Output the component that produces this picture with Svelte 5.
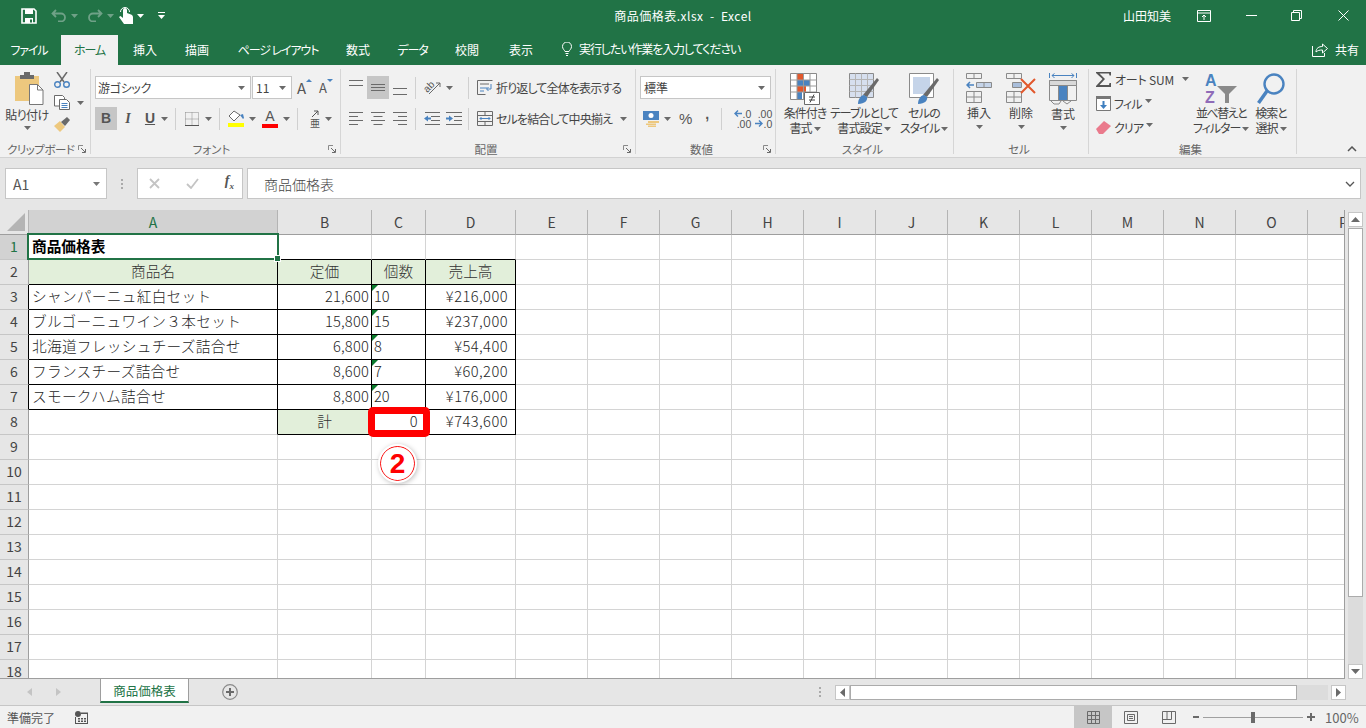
<script>
    const columns = "ABCDEFGHIJKLMNOP".split("");
    const colWidths = [249, 94, 54, 90, 72, 72, 72, 72, 72, 72, 72, 72, 72, 72, 72, 72];

    const data = {
        A1: { t: "商品価格表", c: "bold" },
        A2: { t: "商品名", c: "head box" },
        B2: { t: "定価", c: "head box" },
        C2: { t: "個数", c: "head box" },
        D2: { t: "売上高", c: "head box" },
        A3: { t: "シャンパーニュ紅白セット", c: "box name" },
        B3: { t: "21,600", c: "num box" },
        C3: { t: "10", c: "box warn" },
        D3: { t: "¥216,000", c: "yen box" },
        A4: { t: "ブルゴーニュワイン３本セット", c: "box name" },
        B4: { t: "15,800", c: "num box" },
        C4: { t: "15", c: "box warn" },
        D4: { t: "¥237,000", c: "yen box" },
        A5: { t: "北海道フレッシュチーズ詰合せ", c: "box name" },
        B5: { t: "6,800", c: "num box" },
        C5: { t: "8", c: "box warn" },
        D5: { t: "¥54,400", c: "yen box" },
        A6: { t: "フランスチーズ詰合せ", c: "box name" },
        B6: { t: "8,600", c: "num box" },
        C6: { t: "7", c: "box warn" },
        D6: { t: "¥60,200", c: "yen box" },
        A7: { t: "スモークハム詰合せ", c: "box name" },
        B7: { t: "8,800", c: "num box" },
        C7: { t: "20", c: "box warn" },
        D7: { t: "¥176,000", c: "yen box" },
        A8: { t: "", c: "rightline" },
        B8: { t: "計", c: "head box" },
        C8: { t: "0", c: "yen box" },
        D8: { t: "¥743,600", c: "yen box" },
        B1: { t: "", c: "underline" },
        C1: { t: "", c: "underline" },
        D1: { t: "", c: "underline" }
    };

    const rows = Array.from({ length: 18 }, (_, i) => i + 1);
    const gridTemplate = `29px ${colWidths.map((w) => w + "px").join(" ")}`;

    const tabs = [
        { name: "ファイル", w: 61, kana: true, file: true },
        { name: "ホーム", w: 57, active: true, kana: true },
        { name: "挿入", w: 54 },
        { name: "描画", w: 50 },
        { name: "ページ レイアウト", w: 112, kana: true },
        { name: "数式", w: 48 },
        { name: "データ", w: 61, kana: true },
        { name: "校閲", w: 48 },
        { name: "表示", w: 60 }
    ];
</script>

{#snippet caret(color = "#6a6a6a")}
    <svg class="caret" width="7" height="4" viewBox="0 0 7 4"><path d="M0 0h7L3.5 4z" fill={color} /></svg>
{/snippet}

{#snippet launcher()}
    <svg class="launcher" width="8" height="8" viewBox="0 0 8 8">
        <path d="M.5 5V.5H5" fill="none" stroke="#8a8a8a" />
        <path d="M3 3l4 4M7.5 4v3.5H4" fill="none" stroke="#6a6a6a" />
    </svg>
{/snippet}

<div class="excel">
    <header class="titlebar">
        <div class="qat">
            <svg width="16" height="16" viewBox="0 0 16 16"><path d="M1 1h12l2 2v12H1z" fill="none" stroke="#fff" stroke-width="1.6" /><path d="M4 1h8v5H4zM4 10h8v5H4z" fill="#fff" /><path d="M9 11.5h2v3H9z" fill="#217346" /></svg>
            <svg class="gap-undo" width="16" height="13" viewBox="0 0 16 13"><path d="M5 1L1.5 4.5 5 8M2 4.5h8a4 4 0 0 1 0 8H7" fill="none" stroke="#6fa187" stroke-width="1.8" /></svg>
            <span class="qcaret">{@render caret("#6fa187")}</span>
            <svg class="gap-redo" width="16" height="13" viewBox="0 0 16 13"><path d="M11 1l3.5 3.5L11 8M14 4.5H6a4 4 0 0 0 0 8h3" fill="none" stroke="#6fa187" stroke-width="1.8" /></svg>
            <span class="qcaret">{@render caret("#6fa187")}</span>
            <svg class="gap-touch" width="14" height="17" viewBox="0 0 14 17"><path d="M4 6V3a2 2 0 0 1 4 0v3l4 1.500c1.500.6 2 1.500 2 3V17H5L0 10l1.500-1L4 11z" fill="#fff" /><path d="M1.500 5A4 4 0 1 1 10.500 5" fill="none" stroke="#fff" /></svg>
            <span class="qcaret">{@render caret("#fff")}</span>
            <svg class="gap-custom" width="7" height="8" viewBox="0 0 7 8"><path d="M0 .5h7" stroke="#fff" /><path d="M0 3h7L3.500 7z" fill="#fff" /></svg>
        </div>
        <div class="doc-title">商品価格表.xlsx&nbsp;&nbsp;-&nbsp;&nbsp;Excel</div>
        <div class="winctl">
            <span class="user">山田知美</span>
            <svg class="w-display" width="14" height="12" viewBox="0 0 14 12" fill="none" stroke="#fff"><path d="M.5.500h13v11H.5zM.5 3h13" /><path d="M7 10V5M5 7l2-2 2 2" /></svg>
            <svg class="w-min" width="11" height="1" viewBox="0 0 11 1"><path d="M0 .5h11" stroke="#fff" /></svg>
            <svg class="w-max" width="11" height="11" viewBox="0 0 11 11" fill="none" stroke="#fff"><path d="M.5 2.500h8v8h-8zM2.500 2.500v-2h8v8h-2" /></svg>
            <svg class="w-close" width="11" height="11" viewBox="0 0 11 11" fill="none" stroke="#fff"><path d="M.5.500l10 10M10.500.500l-10 10" /></svg>
        </div>
    </header>

    <nav class="tabs">
        {#each tabs as tab}
            <div class="tab" class:active={tab.active} class:kana={tab.kana} class:file={tab.file} style="width:{tab.w}px">{tab.name}</div>
        {/each}
        <div class="tell">
            <svg width="10" height="14" viewBox="0 0 10 14" fill="none" stroke="#fff"><path d="M3 9.500C2.500 8 .5 7 .5 4.500a4.500 4.500 0 0 1 9 0C9.500 7 7.500 8 7 9.500zM3.500 11.500h3M4 13.500h2" /></svg>
            <span>実行したい作業を入力してください</span>
        </div>
        <div class="share">
            <svg width="16" height="15" viewBox="0 0 16 15" fill="none" stroke="#fff"><path d="M.5 4v10.500h12V11" /><path d="M4 10c0-4 3-5.500 6.500-5.500V2l5 4.500-5 4.500V8C7.500 8 5.500 8.500 4 10z" /></svg>
            <span>共有</span>
        </div>
    </nav>

    <section class="ribbon">
        <div class="group g-clip">
            <div class="body clip-body">
                <div class="big paste">
                    <svg width="29" height="33" viewBox="0 0 29 33">
                        <path d="M0 4h24v25H0z" fill="#edc87e" />
                        <path d="M5 3h4V0h6v3h4v4H5z" fill="#6a6a6a" />
                        <path d="M14.500 12.500h8l5.500 5.500v14.500H14.500z" fill="#fff" stroke="#777" />
                        <path d="M22.500 12.500v5.500H28" fill="none" stroke="#777" />
                    </svg>
                    <span class="lbl">貼り付け</span>
                    {@render caret()}
                </div>
                <div class="clip-tools">
                    <svg width="16" height="16" viewBox="0 0 16 16" fill="none"><path d="M3 0l7 10M13 0L6 10" stroke="#6a6a6a" stroke-width="1.500" /><circle cx="3.500" cy="12.500" r="2.800" stroke="#4a83c0" stroke-width="1.400" /><circle cx="12.500" cy="12.500" r="2.800" stroke="#4a83c0" stroke-width="1.400" /></svg>
                    <div class="copy">
                        <svg width="16" height="15" viewBox="0 0 16 15" fill="#fff" stroke="#6a6a6a"><path d="M.5.500h8l2 2V11H.5z" /><path d="M5.500 4.500h7l3 3v7h-10z" /><path d="M7.500 8.500h6M7.500 10.500h6M7.500 12.500h6" stroke="#4a83c0" /></svg>
                        {@render caret()}
                    </div>
                    <svg width="16" height="15" viewBox="0 0 16 15"><path d="M0 9l6-5 5 6-5 5z" fill="#edc87e" /><path d="M7 5l6-5 3 3-5 6z" fill="#6a6a6a" /></svg>
                </div>
            </div>
            <div class="foot"><span class="glabel">クリップボード</span>{@render launcher()}</div>
        </div>

        <div class="group g-font">
            <div class="body">
                <div class="row">
                    <div class="select fontname"><span>游ゴシック</span>{@render caret()}</div>
                    <div class="select fontsize"><span>11</span>{@render caret()}</div>
                    <div class="grow-a up">A<svg width="6" height="3" viewBox="0 0 6 3"><path d="M0 3h6L3 0z" fill="#4a83c0" /></svg></div>
                    <div class="grow-a down">A<svg width="6" height="3" viewBox="0 0 6 3"><path d="M0 0h6L3 3z" fill="#4a83c0" /></svg></div>
                </div>
                <div class="row">
                    <div class="btn on f-b">B</div>
                    <div class="btn f-i">I</div>
                    <div class="btn f-u">U</div>
                    <span class="c-u">{@render caret()}</span>
                    <i class="sep s-a"></i>
                    <svg class="border-ic" width="14" height="14" viewBox="0 0 14 14" fill="none" stroke="#8a8a8a" stroke-dasharray="1 1"><path d="M.5.500h13v13M7 .500v13M.5 7h13M.5.500v13" /><path d="M0 13.500h14" stroke="#555" stroke-dasharray="none" /></svg>
                    <span class="c-b">{@render caret()}</span>
                    <i class="sep s-b"></i>
                    <div class="fill">
                        <svg width="17" height="12" viewBox="0 0 17 12"><path d="M6 1L1 6l5 5 6-6z" fill="#fff" stroke="#6a6a6a" /><path d="M12 5l3-1 1 4-1 1z" fill="#4a83c0" /></svg>
                        <b class="bar yellow"></b>
                    </div>
                    <span class="c-f">{@render caret()}</span>
                    <div class="fcolor"><span>A</span><b class="bar red"></b></div>
                    <span class="c-fc">{@render caret()}</span>
                    <i class="sep s-c"></i>
                    <div class="phon">
                        <svg width="8" height="8" viewBox="0 0 8 8" fill="none" stroke="#555"><path d="M1 7l6-6M3 1h4v4" /></svg>
                        <span>亜</span>
                    </div>
                    <span class="c-ph">{@render caret()}</span>
                </div>
            </div>
            <div class="foot center"><span class="glabel">フォント</span>{@render launcher()}</div>
        </div>

        <div class="group g-align">
            <div class="body">
                <div class="row">
                    <div class="al top"><svg width="14" height="6" viewBox="0 0 14 6" stroke="#6a6a6a"><path d="M0 .5h14M0 5.500h14" /></svg></div>
                    <div class="al on"><svg width="14" height="7" viewBox="0 0 14 7" stroke="#6a6a6a"><path d="M0 .5h14M0 3.500h14M0 6.500h14" /></svg></div>
                    <div class="al low"><svg width="14" height="7" viewBox="0 0 14 7" stroke="#6a6a6a"><path d="M0 .5h14M0 6.500h14" /></svg></div>
                    <i class="sep s-d"></i>
                    <svg class="orient" width="17" height="15" viewBox="0 0 17 15" fill="none" stroke="#6a6a6a">
                        <text x="0" y="11" transform="rotate(-45 4 8)" class="ab">ab</text>
                        <path d="M5 14L16 3M16 3h-4M16 3v4" />
                    </svg>
                    <span class="c-or">{@render caret()}</span>
                    <i class="sep s-e"></i>
                    <div class="wrap-btn">
                        <svg width="16" height="15" viewBox="0 0 16 15" fill="none" stroke="#6a6a6a"><path d="M.5.500h15M.5.500v14h8M3 4h9" /><path d="M3 8h7M3 11h4" stroke="#4a83c0" /><path d="M14 4v5h-4M11.500 7L9.500 9l2 2" stroke="#4a83c0" /></svg>
                        <span class="lbl">折り返して全体を表示する</span>
                    </div>
                </div>
                <div class="row">
                    <div class="al top2"><svg width="14" height="13" viewBox="0 0 14 13" stroke="#6a6a6a"><path d="M0 .5h14M0 4.500h9M0 8.500h14M0 12.500h9" /></svg></div>
                    <div class="al"><svg width="14" height="13" viewBox="0 0 14 13" stroke="#6a6a6a"><path d="M0 .5h14M2.500 4.500h9M0 8.500h14M2.500 12.500h9" /></svg></div>
                    <div class="al"><svg width="14" height="13" viewBox="0 0 14 13" stroke="#6a6a6a"><path d="M0 .5h14M5 4.500h9M0 8.500h14M5 12.500h9" /></svg></div>
                    <i class="sep s-d"></i>
                    <svg class="ind1" width="16" height="13" viewBox="0 0 16 13"><path d="M1 .5h15M7 4.500h9M7 8.500h9M1 12.500h15" stroke="#6a6a6a" /><path d="M0 6.500l4-3v2h3v2H4v2z" fill="#4a83c0" /></svg>
                    <svg class="ind2" width="16" height="13" viewBox="0 0 16 13"><path d="M0 .5h16M8 4.500h8M8 8.500h8M0 12.500h16" stroke="#6a6a6a" /><path d="M7 6.500l-4-3v2H0v2h3v2z" fill="#4a83c0" /></svg>
                    <i class="sep s-f"></i>
                    <div class="wrap-btn">
                        <svg width="16" height="15" viewBox="0 0 16 15" fill="none" stroke="#6a6a6a"><path d="M.5.500h15v14H.5zM.5 4.500h15M.5 10.500h15M8 .5v4M8 10.500v4" /><path d="M3 7.500h10M4.500 6L3 7.500 4.500 9M11.500 6L13 7.500 11.500 9" stroke="#4a83c0" /></svg>
                        <span class="lbl">セルを結合して中央揃え</span>
                        <span class="c-merge">{@render caret()}</span>
                    </div>
                </div>
            </div>
            <div class="foot center"><span class="glabel">配置</span>{@render launcher()}</div>
        </div>

        <div class="group g-num">
            <div class="body">
                <div class="row">
                    <div class="select numfmt"><span>標準</span>{@render caret()}</div>
                </div>
                <div class="row">
                    <svg class="cur" width="16" height="16" viewBox="0 0 16 16"><path d="M0 0h16v9H0z" fill="#4a83c0" /><circle cx="8" cy="4.500" r="2.500" fill="#fff" /><path d="M5 10h11v2H5zM3 12.500h10v1.500H3zM5 14.500h8V16H5z" fill="#edc87e" /></svg>
                    <span class="c-cur">{@render caret()}</span>
                    <span class="pct">%</span>
                    <span class="comma">,</span>
                    <i class="sep s-g"></i>
                    <div class="dec">
                        <div class="drow"><svg width="8" height="7" viewBox="0 0 8 7"><path d="M4 .5L1 3.500l3 3M1 3.500h7" fill="none" stroke="#4a83c0" stroke-width="1.400" /></svg><span>.0</span></div>
                        <div class="drow"><span>.00</span></div>
                    </div>
                    <div class="dec">
                        <div class="drow"><span>.00</span></div>
                        <div class="drow"><svg width="8" height="7" viewBox="0 0 8 7"><path d="M4 .5l3 3-3 3M7 3.500H0" fill="none" stroke="#4a83c0" stroke-width="1.400" /></svg><span>.0</span></div>
                    </div>
                </div>
            </div>
            <div class="foot center"><span class="glabel">数値</span>{@render launcher()}</div>
        </div>

        <div class="group g-style">
            <div class="body bigs">
                <div class="big s1">
                    <svg width="30" height="32" viewBox="0 0 30 32">
                        <path d="M.5.500h26v26H.5z" fill="#fff" stroke="#8a8a8a" />
                        <path d="M7 1h6v6H7z" fill="#e2582c" /><path d="M7 7h13v6H7z" fill="#4a83c0" /><path d="M7 13h9v6H7z" fill="#e2582c" /><path d="M7 19h5v7H7z" fill="#4a83c0" />
                        <path d="M.5 7h26M.5 13h26M.5 19h26M7 .5v26M13.500.500v26M20 .500v26" fill="none" stroke="#9a9a9a" />
                        <path d="M14.500 19.500h15v12h-15z" fill="#fff" stroke="#6a6a6a" />
                        <path d="M19 24h6M19 27h6M20 29.500l4-8" fill="none" stroke="#444" />
                    </svg>
                    <span class="lbl xs">条件付き</span>
                    <span class="lbl">書式 {@render caret()}</span>
                </div>
                <div class="big s2">
                    <svg width="30" height="32" viewBox="0 0 30 32">
                        <path d="M.5.500h24v24H.5z" fill="#d6dfee" stroke="#8a8a8a" />
                        <path d="M.5 6.500h24M.5 12.500h24M.5 18.500h24M6.500.500v24M12.500.500v24M18.500.500v24" fill="none" stroke="#b4b4b4" />
                        <path d="M14 22l14-17 2 2-12 17z" fill="#6a6a6a" />
                        <path d="M9 31c0-5 3-9 6-9l3 2c1 3-2 7-9 7z" fill="#4a83c0" />
                    </svg>
                    <span class="lbl xs">テーブルとして</span>
                    <span class="lbl">書式設定 {@render caret()}</span>
                </div>
                <div class="big s3">
                    <svg width="30" height="32" viewBox="0 0 30 32">
                        <path d="M.5.500h24v24H.5z" fill="#fff" stroke="#8a8a8a" />
                        <path d="M4 4h17v17H4z" fill="#c5d4e9" />
                        <path d="M14 22l14-17 2 2-12 17z" fill="#6a6a6a" />
                        <path d="M9 31c0-5 3-9 6-9l3 2c1 3-2 7-9 7z" fill="#4a83c0" />
                    </svg>
                    <span class="lbl">セルの</span>
                    <span class="lbl">スタイル {@render caret()}</span>
                </div>
            </div>
            <div class="foot plain"><span class="glabel">スタイル</span></div>
        </div>

        <div class="group g-cell">
            <div class="body bigs">
                <div class="big c1">
                    <svg width="26" height="32" viewBox="0 0 26 32" fill="none" stroke="#8a8a8a">
                        <path d="M.5.500h15v5H.5zM8 .5v5M.5 18.500h15v11H.5zM.5 24h15M8 18.500v11" />
                        <path d="M10.500 9.500h15v5h-15zM18 9.500v5" fill="#c5d4e9" />
                        <path d="M8 12H1M4 9l-3 3 3 3" stroke="#4a83c0" stroke-width="1.500" />
                    </svg>
                    <span class="lbl">挿入</span>
                    {@render caret()}
                </div>
                <div class="big c2">
                    <svg width="30" height="32" viewBox="0 0 30 32" fill="none" stroke="#8a8a8a">
                        <path d="M.5.500h15v5H.5zM8 .5v5M.5 18.500h15v11H.5zM.5 24h15M8 18.500v11M6.500 9.500h9v5h-9z" />
                        <path d="M7 10h8v4H7z" fill="#a9bedb" stroke="none" />
                        <path d="M15 6l14 14M29 6L15 20" stroke="#e2582c" stroke-width="2" />
                    </svg>
                    <span class="lbl">削除</span>
                    {@render caret()}
                </div>
                <div class="big c3">
                    <svg width="28" height="33" viewBox="0 0 28 33" fill="none" stroke="#8a8a8a">
                        <path d="M.5 0v5M27.500 0v5M3 2.500h22M3 2.500l2.500-2M3 2.500L5.500 5M25 2.500l-2.500-2M25 2.500L22.500 5" stroke="#4a83c0" />
                        <path d="M.5 7.500h27v20H.5zM.5 12.500h27M9.500 7.500v20M18.500 7.500v20" />
                        <path d="M10 8h8v19h-8z" fill="#4a83c0" stroke="none" />
                        <path d="M.5 7.500h27v5H.5z" fill="#d9d9d9" />
                        <path d="M2 28l3 3h5l2-3M14 28l4 3 4-3" />
                    </svg>
                    <span class="lbl">書式</span>
                    {@render caret()}
                </div>
            </div>
            <div class="foot plain"><span class="glabel">セル</span></div>
        </div>

        <div class="group g-edit">
            <div class="body edit-body">
                <div class="edit-list">
                    <div class="eitem">
                        <svg width="16" height="15" viewBox="0 0 16 15"><path d="M0 0h15v3.500h-1.500L13 1.500H3.500L9 7l-5.500 6H13l.5-2H15v4H0v-1l6.500-7L0 1z" fill="#555" /></svg>
                        <span class="lbl sum">オート SUM</span>
                        <span class="c-sum">{@render caret()}</span>
                    </div>
                    <div class="eitem">
                        <svg width="15" height="15" viewBox="0 0 15 15"><path d="M.5.500h14v14H.5z" fill="#fff" stroke="#777" /><path d="M0 0h15v3H0z" fill="#777" /><path d="M6.500 5h2v4H11l-3.500 4L4 9h2.500z" fill="#3f7fbf" /></svg>
                        <span class="lbl">フィル</span>
                        <span class="c-e">{@render caret()}</span>
                    </div>
                    <div class="eitem">
                        <svg width="15" height="13" viewBox="0 0 15 13"><path d="M0 8l8-8 7 5-8 8H3z" fill="#ea7a8c" /></svg>
                        <span class="lbl">クリア</span>
                        <span class="c-e">{@render caret()}</span>
                    </div>
                </div>
                <div class="big e1">
                    <svg width="32" height="32" viewBox="0 0 32 32">
                        <text x="0" y="13" class="az blue">A</text>
                        <text x="0" y="30" class="az purple">Z</text>
                        <path d="M12 13h20l-8 8v9h-4v-9z" fill="#8a8a8a" />
                    </svg>
                    <span class="lbl xt">並べ替えと</span>
                    <span class="lbl xs">フィルター {@render caret()}</span>
                </div>
                <div class="big e2">
                    <svg width="28" height="32" viewBox="0 0 28 32" fill="none"><circle cx="17" cy="11" r="9.500" stroke="#4a83c0" stroke-width="2.400" /><path d="M10 18L1.500 30" stroke="#4a83c0" stroke-width="3.500" /></svg>
                    <span class="lbl xs">検索と</span>
                    <span class="lbl">選択 {@render caret()}</span>
                </div>
            </div>
            <div class="foot plain"><span class="glabel">編集</span></div>
        </div>

        <svg class="collapse" width="10" height="6" viewBox="0 0 10 6"><path d="M1 5l4-4 4 4" fill="none" stroke="#555" stroke-width="1.500" /></svg>
    </section>

    <section class="formula">
        <div class="namebox"><span>A1</span>{@render caret("#777")}</div>
        <div class="dots"><i></i><i></i><i></i></div>
        <div class="fbtns">
            <svg width="11" height="11" viewBox="0 0 11 11"><path d="M1 1l9 9M10 1l-9 9" stroke="#c4c4c4" stroke-width="1.800" /></svg>
            <svg width="13" height="11" viewBox="0 0 13 11"><path d="M1 6l4 4 7-9" fill="none" stroke="#c4c4c4" stroke-width="1.800" /></svg>
            <span class="fx">f<sub>x</sub></span>
        </div>
        <div class="finput">
            <span>商品価格表</span>
            <svg width="10" height="6" viewBox="0 0 10 6"><path d="M1 1l4 4 4-4" fill="none" stroke="#555" stroke-width="1.300" /></svg>
        </div>
    </section>

    <section class="sheet">
        <div class="gridwrap">
            <div class="grid" style="grid-template-columns:{gridTemplate}">
                <div class="corner"><svg width="18" height="18" viewBox="0 0 18 18"><path d="M18 0v18H0z" fill="#b4b4b4" /></svg></div>
                {#each columns as col}
                    <div class="colhead" class:sel={col == "A"}>{col}</div>
                {/each}
                {#each rows as row}
                    <div class="rowhead" class:sel={row == 1} class:dark={row >= 3 && row <= 7}>{row}</div>
                    {#each columns as col}
                        {@const cell = data[col + row]}
                        <div class="cell {cell ? cell.c : ''}">{cell ? cell.t : ""}</div>
                    {/each}
                {/each}
            </div>
            <div class="selection"><i></i></div>
            <div class="redbox"></div>
            <div class="circled">2</div>
        </div>
        <div class="vscroll">
            <div class="sbtn"><svg width="9" height="5" viewBox="0 0 9 5"><path d="M0 5h9L4.500 0z" fill="#6a6a6a" /></svg></div>
            <div class="vthumb"></div>
            <div class="vtrack"></div>
            <div class="sbtn"><svg width="9" height="5" viewBox="0 0 9 5"><path d="M0 0h9L4.500 5z" fill="#6a6a6a" /></svg></div>
        </div>
    </section>

    <section class="sheetbar">
        <div class="navs">
            <svg width="5" height="8" viewBox="0 0 5 8"><path d="M5 0v8L0 4z" fill="#c4c4c4" /></svg>
            <svg width="5" height="8" viewBox="0 0 5 8"><path d="M0 0v8l5-4z" fill="#c4c4c4" /></svg>
        </div>
        <div class="sheettab">商品価格表</div>
        <svg class="addsheet" width="16" height="16" viewBox="0 0 16 16" fill="none"><circle cx="8" cy="8" r="7.300" stroke="#8a8a8a" stroke-width="1.200" /><path d="M8 4v8M4 8h8" stroke="#6a6a6a" stroke-width="2" /></svg>
        <div class="hdots"><i></i><i></i><i></i></div>
        <div class="hscroll">
            <div class="sbtn h"><svg width="5" height="9" viewBox="0 0 5 9"><path d="M5 0v9L0 4.500z" fill="#6a6a6a" /></svg></div>
            <div class="hthumb"></div>
            <div class="htrack"></div>
            <div class="sbtn h right"><svg width="5" height="9" viewBox="0 0 5 9"><path d="M0 0v9l5-4.500z" fill="#6a6a6a" /></svg></div>
        </div>
    </section>

    <footer class="status">
        <span class="ready">準備完了</span>
        <svg class="macro" width="13" height="13" viewBox="0 0 13 13"><circle cx="3" cy="3" r="3" fill="#555" /><path d="M6 1.500h7V13H0V6h1v6h11V3H6z" fill="#555" /><path d="M3 7h2v1.500H3zM6 7h2v1.500H6zM9 7h2v1.500H9zM3 9.500h2V11H3zM6 9.500h2V11H6zM9 9.500h2V11H9z" fill="#555" /></svg>
        <div class="views">
            <div class="view on"><svg width="13" height="13" viewBox="0 0 13 13" fill="none" stroke="#6a6a6a"><path d="M.5.500h12v12H.5zM4.500.500v12M8.500.500v12M.5 4.500h12M.5 8.500h12" /></svg></div>
            <div class="view"><svg width="14" height="13" viewBox="0 0 14 13" fill="none" stroke="#6a6a6a"><path d="M.5.500h13v12H.5zM3.500 3.500h7v6h-7zM5 5.500h4M5 7.500h4" /></svg></div>
            <div class="view"><svg width="14" height="13" viewBox="0 0 14 13" fill="none" stroke="#6a6a6a"><path d="M.5.500h13v12H.5zM.5 8.500h9v-8" /><path d="M5 .5v8" /></svg></div>
        </div>
        <div class="zoom">
            <b class="zminus"></b>
            <div class="slider"><i></i></div>
            <b class="zplus"></b>
            <span>100%</span>
        </div>
    </footer>
</div>

<style>
    :global(body) {
        margin: 0;
        overflow: hidden;
    }

    .excel {
        width: 1366px;
        height: 728px;
        display: flex;
        flex-direction: column;
        overflow: hidden;
        font-family: "Noto Sans CJK JP", "Noto Sans", sans-serif;
        font-feature-settings: "palt";
        font-size: 12px;
        color: #444;
        background: #e6e6e6;
    }

    svg {
        display: block;
        flex: none;
    }

    .titlebar {
        height: 35px;
        flex: none;
        box-sizing: border-box;
        padding-bottom: 4px;
        display: grid;
        grid-template-columns: 1fr auto 1fr;
        align-items: center;
        background: #217346;
        color: #fff;
    }

    .qat,
    .winctl {
        display: flex;
        align-items: center;
    }

    .qat {
        padding-left: 21px;
    }

    .gap-undo { margin-left: 14px; }
    .qcaret { margin-left: 4px; }
    .gap-redo { margin-left: 9px; }
    .gap-touch { margin-left: 5px; }
    .gap-custom { margin-left: 14px; }

    .doc-title {
        font-size: 12px;
        line-height: 20px;
        letter-spacing: 0.500px;
    }

    .winctl {
        justify-content: flex-end;
    }

    .user {
        margin-right: 26px;
    }

    .w-min { margin-left: 35px; }
    .w-max { margin-left: 34px; }
    .w-close { margin-left: 36px; margin-right: 17px; }

    .tabs {
        height: 30px;
        flex: none;
        display: flex;
        align-items: stretch;
        background: #217346;
        color: #fff;
        line-height: 29px;
    }

    .tab {
        text-align: center;
        white-space: nowrap;
    }

    .tab.file {
        padding-right: 3px;
        box-sizing: border-box;
    }

    .tab.kana {
        letter-spacing: -1.100px;
    }

    .tab.active {
        background: #f1f1f1;
        color: #217346;
    }

    .tell {
        display: flex;
        align-items: center;
        gap: 7px;
        margin-left: 11px;
        padding-bottom: 3px;
        letter-spacing: -1.100px;
    }

    .share {
        display: flex;
        align-items: center;
        gap: 7px;
        margin-left: auto;
        padding-right: 7px;
        padding-bottom: 1px;
    }

    .ribbon {
        position: relative;
        height: 93px;
        flex: none;
        display: flex;
        box-sizing: border-box;
        background: #f1f1f1;
        border-bottom: 1px solid #d2d2d2;
        padding-top: 4px;
    }

    .group {
        height: 85px;
        box-sizing: border-box;
        border-right: 1px solid #d6d6d6;
        display: flex;
        flex-direction: column;
        flex: none;
    }

    .g-clip { width: 91px; }
    .g-font { width: 250px; padding-left: 4px; }
    .g-align { width: 295px; padding-left: 8px; }
    .g-num { width: 140px; padding-left: 4px; }
    .g-style { width: 178px; }
    .g-cell { width: 135px; }
    .g-edit { width: 208px; }

    .body {
        height: 68px;
        padding-top: 7px;
        flex: none;
    }

    .row {
        height: 23px;
        display: flex;
        align-items: center;
        margin-bottom: 8px;
    }

    .row:last-child {
        margin-bottom: 0;
    }

    .foot {
        height: 16px;
        margin-top: -3px;
        display: flex;
        align-items: center;
        padding-right: 4px;
        flex: none;
    }

    .foot.center .glabel,
    .foot.plain .glabel {
        flex: 1;
        text-align: center;
    }

    .glabel {
        font-size: 11.500px;
        color: #666;
        white-space: nowrap;
    }

    .g-clip .glabel {
        margin-left: 7px;
        flex: 1;
        letter-spacing: -0.500px;
    }

    .lbl {
        display: block;
        white-space: nowrap;
        line-height: 15px;
        color: #444;
        letter-spacing: -0.850px;
    }

    .lbl.xs { letter-spacing: -1px; }
    .lbl.xt { letter-spacing: -1.500px; }
    .lbl.sum { letter-spacing: -0.200px; }
    .g-cell .lbl { letter-spacing: 0; }

    .lbl :global(.caret) {
        display: inline-block;
        vertical-align: 2px;
    }

    .big {
        display: flex;
        flex-direction: column;
        align-items: center;
        flex: none;
    }

    .clip-body {
        display: flex;
        padding-top: 3px;
        height: 72px;
    }

    .paste {
        width: 54px;
    }

    .paste > svg:first-child {
        margin: 0 0 0 5px;
    }

    .paste .lbl {
        margin-top: 2px;
        letter-spacing: -0.500px;
    }

    .paste :global(.caret) {
        margin-top: 4px;
    }

    .clip-tools {
        display: flex;
        flex-direction: column;
        gap: 7px;
    }

    .copy {
        display: flex;
        align-items: center;
        gap: 7px;
    }

    .select {
        height: 23px;
        box-sizing: border-box;
        background: #fff;
        border: 1px solid #c6c6c6;
        display: flex;
        align-items: center;
        justify-content: space-between;
        padding: 0 5px 0 2px;
        flex: none;
    }

    .fontname { width: 156px; letter-spacing: -0.300px; }
    .fontsize { width: 40px; margin-left: 1px; padding-left: 3px; }
    .numfmt { width: 131px; padding-left: 3px; }

    .grow-a {
        font-size: 15px;
        line-height: 18px;
        color: #555;
        display: flex;
        align-items: flex-start;
        flex: none;
    }

    .grow-a.up { margin-left: 5px; width: 22px; }
    .grow-a.down { font-size: 13px; width: 16px; }

    .btn {
        width: 22px;
        height: 23px;
        line-height: 23px;
        text-align: center;
        flex: none;
        font-family: "Liberation Sans", sans-serif;
        font-size: 14px;
        font-weight: bold;
        color: #555;
    }

    .on {
        background: #c6c6c6;
    }

    .f-i { font-style: italic; font-family: "Liberation Serif", serif; }
    .f-u { text-decoration: underline; }

    .sep {
        display: block;
        width: 1px;
        height: 22px;
        background: #d0d0d0;
        flex: none;
    }

    .s-a { margin: 0 9px 0 7px; }
    .s-b { margin: 0 8px 0 7px; }
    .c-b { margin-left: 6px; }
    .s-c { margin: 0 10px 0 7px; }
    .s-d { margin: 0 8px 0 4px; }
    .s-e { margin: 0 8px 0 15px; }
    .s-f { margin: 0 8px 0 6px; }
    .s-g { margin: 0 8px 0 12px; }

    .fill,
    .fcolor {
        width: 16px;
        flex: none;
        display: flex;
        flex-direction: column;
        align-items: center;
    }

    .fcolor span {
        font-family: "Liberation Sans", sans-serif;
        font-size: 14px;
        line-height: 13px;
        color: #555;
    }

    .bar {
        display: block;
        width: 16px;
        height: 4px;
        margin-top: 1px;
    }

    .yellow { background: #ffff00; }
    .red { background: #ff0000; }
    .c-f { margin: 0 6px 0 5px; }
    .c-fc { margin-left: 5px; }

    .phon {
        width: 14px;
        flex: none;
        font-size: 10px;
        line-height: 10px;
        color: #555;
        display: flex;
        flex-direction: column;
        align-items: center;
    }

    .c-ph { margin-left: 3px; }

    .al {
        width: 22px;
        height: 23px;
        box-sizing: border-box;
        display: flex;
        align-items: center;
        justify-content: center;
        flex: none;
    }

    .al.top {
        width: 18px;
        justify-content: flex-start;
        align-items: flex-start;
        padding-top: 4px;
    }

    .al.top2 {
        width: 18px;
        justify-content: flex-start;
    }

    .al.low {
        align-items: flex-end;
        padding-bottom: 4px;
    }

    .orient {
        overflow: visible;
    }

    .ab {
        font-family: "Liberation Sans", sans-serif;
        font-size: 10px;
        fill: #555;
        stroke: none;
    }

    .c-or { margin-left: 5px; }

    .wrap-btn {
        display: flex;
        align-items: center;
        gap: 3px;
        flex: none;
    }

    .c-merge { margin-left: 5px; }

    .ind2 { margin-left: 6px; }

    .cur { margin-left: 3px; }
    .c-cur { margin-left: 5px; }

    .pct {
        margin-left: 8px;
        font-family: "Liberation Sans", sans-serif;
        font-size: 15px;
        color: #555;
    }

    .comma {
        margin-left: 13px;
        margin-bottom: 9px;
        font-family: "Liberation Sans", sans-serif;
        font-weight: bold;
        font-size: 14px;
        line-height: 14px;
        color: #555;
    }

    .dec {
        width: 21px;
        flex: none;
        font-family: "Liberation Sans", sans-serif;
        font-size: 10.500px;
        line-height: 10px;
        color: #555;
    }

    .drow {
        display: flex;
        justify-content: flex-end;
        align-items: center;
        height: 10px;
    }

    .bigs {
        display: flex;
        padding-top: 4px;
        height: 71px;
    }

    .s1 { width: 58px; }
    .s2 { width: 60px; }
    .s3 { width: 60px; }
    .g-cell .big { width: 42px; }
    .g-cell .bigs { padding-left: 4px; }
    .g-cell :global(.caret) { margin-top: 5px; }

    .edit-body {
        display: flex;
        padding-top: 0;
        height: 75px;
    }

    .edit-list {
        display: flex;
        flex-direction: column;
        gap: 6px;
        padding: 1px 0 0 7px;
        width: 93px;
        flex: none;
    }

    .eitem {
        display: flex;
        align-items: center;
        gap: 3px;
        height: 18px;
    }

    .c-sum { margin-left: 5px; }
    .c-e { margin-left: 0; margin-top: -4px; }

    .e1, .e2 { padding-top: 4px; }
    .e1 { width: 64px; }
    .e2 { width: 36px; }

    .az {
        font-family: "Liberation Sans", sans-serif;
        font-weight: bold;
        font-size: 16px;
    }

    .blue { fill: #4a83c0; }
    .purple { fill: #8f6bb8; }

    .collapse {
        position: absolute;
        right: 9px;
        bottom: 5px;
    }

    .formula {
        height: 52px;
        flex: none;
        box-sizing: border-box;
        display: flex;
        align-items: center;
        padding: 0 5px 1px;
        background: #e6e6e6;
    }

    .namebox,
    .fbtns,
    .finput {
        height: 31px;
        box-sizing: border-box;
        background: #fff;
        border: 1px solid #c6c6c6;
        display: flex;
        align-items: center;
        flex: none;
    }

    .namebox {
        width: 102px;
        justify-content: space-between;
        padding: 0 6px 0 7px;
        font-size: 14px;
        color: #555;
    }

    .dots {
        width: 30px;
        display: flex;
        flex-direction: column;
        align-items: center;
        gap: 2px;
        flex: none;
    }

    .dots i,
    .hdots i {
        display: block;
        width: 2px;
        height: 2px;
        background: #aaa;
    }

    .fbtns {
        width: 106px;
        justify-content: space-between;
        padding: 0 8px 0 11px;
    }

    .fx {
        font-family: "Liberation Serif", serif;
        font-style: italic;
        font-weight: bold;
        font-size: 14px;
        line-height: 14px;
        color: #555;
    }

    .fx sub {
        font-size: 9px;
    }

    .finput {
        width: 1114px;
        margin-left: 4px;
        padding: 0 5px 0 16px;
        justify-content: space-between;
        font-size: 14px;
        font-weight: 300;
        color: #444;
        font-feature-settings: normal;
    }

    .sheet {
        height: 469px;
        flex: none;
        display: flex;
        box-sizing: border-box;
    }

    .gridwrap {
        position: relative;
        width: 1345px;
        height: 469px;
        overflow: hidden;
        background: #fff;
        flex: none;
        border-bottom: 1px solid #9e9e9e;
        border-right: 1px solid #9e9e9e;
        box-sizing: border-box;
    }

    .grid {
        display: grid;
        grid-auto-rows: 25px;
        font-size: 14.670px;
        font-weight: 300;
        font-feature-settings: normal;
        color: #262626;
    }

    .corner {
        background: #e6e6e6;
        border-right: 1px solid #b4b4b4;
        border-bottom: 1px solid #9e9e9e;
        box-sizing: border-box;
        padding: 3px 0 0 7px;
    }

    .colhead,
    .rowhead {
        background: #e6e6e6;
        box-sizing: border-box;
        text-align: center;
        font-size: 14px;
        font-weight: 400;
        color: #444;
    }

    .colhead {
        line-height: 25px;
        border-right: 1px solid #b4b4b4;
        border-bottom: 1px solid #9e9e9e;
    }

    .rowhead {
        line-height: 23px;
        border-right: 1px solid #9e9e9e;
        border-bottom: 1px solid #c6c6c6;
    }

    .rowhead.dark {
        border-right-color: #000;
    }

    .colhead.sel,
    .rowhead.sel {
        background: #d2d2d2;
        color: #217346;
    }

    .cell {
        box-sizing: border-box;
        border-right: 1px solid #d4d4d4;
        border-bottom: 1px solid #d4d4d4;
        padding: 0 3px;
        line-height: 21px;
        white-space: nowrap;
        position: relative;
    }

    .name {
        letter-spacing: 0.300px;
    }

    .box {
        border-right-color: #000;
        border-bottom-color: #000;
    }

    .underline {
        border-bottom-color: #000;
    }

    .rightline {
        border-right-color: #000;
    }

    .bold {
        font-weight: bold;
        color: #000;
    }

    .head {
        background: #e2efda;
        text-align: center;
        color: #333;
    }

    .num {
        text-align: right;
        padding-right: 2px;
        letter-spacing: 0.200px;
    }

    .yen {
        text-align: right;
        padding-right: 7px;
        letter-spacing: 0.450px;
    }

    .warn {
        padding-left: 2px;
    }

    .warn::before {
        content: "";
        position: absolute;
        left: 0;
        top: 0;
        border-top: 6px solid #0b7a2c;
        border-right: 6px solid transparent;
    }

    .selection {
        position: absolute;
        left: 27px;
        top: 23px;
        width: 252px;
        height: 27px;
        box-sizing: border-box;
        border: 2px solid #217346;
    }

    .selection i {
        position: absolute;
        right: -4px;
        bottom: -4px;
        width: 5px;
        height: 5px;
        background: #217346;
        border: 1px solid #fff;
    }

    .redbox {
        position: absolute;
        left: 368px;
        top: 197px;
        width: 62px;
        height: 30px;
        box-sizing: border-box;
        border: 7px solid #ff0000;
        border-radius: 5px;
    }

    .circled {
        position: absolute;
        left: 380px;
        top: 236px;
        width: 35px;
        height: 35px;
        box-sizing: border-box;
        border: 1px solid #ff0000;
        border-radius: 50%;
        outline: 2px solid #fff;
        background: #fff;
        box-shadow: 1px 1px 5px 2px rgba(0, 0, 0, 0.25);
        color: #ff0000;
        font-family: "Liberation Sans", sans-serif;
        font-weight: bold;
        font-size: 28px;
        line-height: 33px;
        text-align: center;
    }

    .vscroll {
        width: 21px;
        height: 469px;
        box-sizing: border-box;
        padding: 2px 3px 0 3px;
        display: flex;
        flex-direction: column;
        background: #e6e6e6;
    }

    .sbtn {
        height: 15px;
        flex: none;
        box-sizing: border-box;
        background: #fff;
        border: 1px solid #c6c6c6;
        display: flex;
        align-items: center;
        justify-content: center;
    }

    .vthumb {
        height: 369px;
        flex: none;
        box-sizing: border-box;
        background: #fff;
        border: 1px solid #ababab;
        margin-top: 1px;
    }

    .vtrack {
        flex: 1;
        background: #dcdcdc;
    }

    .sheetbar {
        height: 27px;
        flex: none;
        display: flex;
        align-items: flex-start;
        box-sizing: border-box;
        background: #e6e6e6;
        border-bottom: 1px solid #c6c6c6;
    }

    .navs {
        width: 100px;
        box-sizing: border-box;
        height: 25px;
        display: flex;
        align-items: center;
        gap: 24px;
        padding-left: 27px;
        flex: none;
    }

    .sheettab {
        width: 89px;
        height: 25px;
        box-sizing: border-box;
        background: #fff;
        border-left: 1px solid #9e9e9e;
        border-right: 1px solid #9e9e9e;
        border-bottom: 2px solid #217346;
        margin-top: -1px;
        text-align: center;
        line-height: 25px;
        color: #217346;
        font-size: 12.500px;
        font-feature-settings: normal;
        flex: none;
    }

    .addsheet {
        margin: 5px 0 0 33px;
    }

    .hdots {
        display: flex;
        flex-direction: column;
        gap: 2px;
        margin: 8px 0 0 581px;
        flex: none;
    }

    .hscroll {
        display: flex;
        margin: 6px 0 0 14px;
        width: 511px;
        height: 15px;
        flex: none;
        background: #dcdcdc;
    }

    .sbtn.h {
        width: 15px;
    }

    .sbtn.right {
        box-shadow: -3px 0 0 #e6e6e6;
    }

    .hthumb {
        width: 447px;
        box-sizing: border-box;
        background: #fff;
        border: 1px solid #ababab;
        flex: none;
    }

    .htrack {
        flex: 1;
        background: #dcdcdc;
    }

    .status {
        flex: 1;
        display: flex;
        align-items: center;
        background: #f1f1f1;
        padding-left: 7px;
        min-height: 0;
    }

    .ready {
        color: #555;
        font-feature-settings: normal;
    }

    .macro {
        margin-left: 20px;
    }

    .views {
        display: flex;
        margin-left: auto;
        height: 100%;
    }

    .view {
        width: 38px;
        display: flex;
        align-items: center;
        justify-content: center;
    }

    .zoom {
        display: flex;
        align-items: center;
        width: 178px;
        padding-left: 5px;
        box-sizing: border-box;
        height: 100%;
        font-size: 13px;
        color: #666;
    }

    .zminus {
        display: block;
        width: 6px;
        height: 2px;
        background: #6a6a6a;
        flex: none;
    }

    .slider {
        position: relative;
        width: 100px;
        height: 1px;
        margin: 0 4px;
        background: #a0a0a0;
        flex: none;
    }

    .slider i {
        position: absolute;
        left: 48px;
        top: -5px;
        width: 4px;
        height: 11px;
        background: #6a6a6a;
    }

    .zplus {
        position: relative;
        display: block;
        width: 8px;
        height: 2px;
        background: #6a6a6a;
        flex: none;
    }

    .zplus::after {
        content: "";
        position: absolute;
        left: 3px;
        top: -3px;
        width: 2px;
        height: 8px;
        background: #6a6a6a;
    }

    .zoom span {
        margin-left: 10px;
    }
</style>
